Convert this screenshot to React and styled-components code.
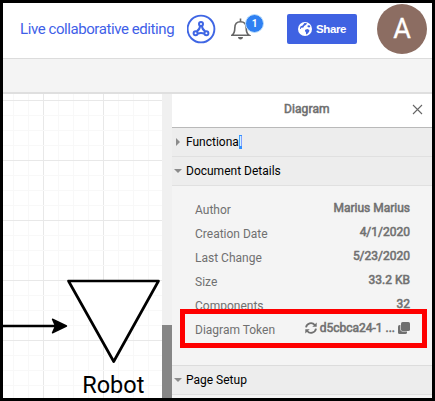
import React from "react";
import styled, { createGlobalStyle } from "styled-components";

const GlobalStyle = createGlobalStyle`
  *, *::before, *::after { box-sizing: border-box; }
  body { margin: 0; background: #000; }
`;

const Frame = styled.div`
  width: 435px;
  height: 401px;
  border: 3px solid #000;
  background: #fff;
  display: flex;
  flex-direction: column;
  overflow: hidden;
  position: relative;
  font-family: Roboto, "Liberation Sans", sans-serif;
`;

const Header = styled.header`
  height: 56px;
  flex: none;
  display: flex;
  align-items: flex-start;
  border-bottom: 1px solid #dcdcdc;
  padding-left: 17px;
`;

const LiveLink = styled.span`
  width: 167px;
  padding-top: 16px;
  font-size: 15px;
  letter-spacing: -0.42px;
  line-height: 20px;
  color: #3f5fe8;
  white-space: nowrap;
`;

const CollabIcon = styled.svg`
  width: 30px;
  height: 30px;
  margin-top: 11px;
  flex: none;
`;

const Notifications = styled.div`
  position: relative;
  width: 34px;
  height: 30px;
  margin: 11px 0 0 14px;
  flex: none;
`;

const BellIcon = styled.svg`
  display: block;
  width: 20px;
  height: 24px;
  margin-top: 3px;
`;

const Badge = styled.span`
  position: absolute;
  left: 14px;
  top: 0;
  width: 19px;
  height: 19px;
  border-radius: 50%;
  border: 1px solid #bfe0fb;
  background: #2f80f2;
  color: #fff;
  font-size: 10px;
  font-weight: 700;
  line-height: 17px;
  text-align: center;
`;

const ShareButton = styled.button`
  width: 70px;
  height: 30px;
  margin: 11px 0 0 22px;
  padding: 0 0 0 11px;
  border: 0;
  border-radius: 2px;
  background: #3f62e2;
  color: #fff;
  display: flex;
  align-items: center;
  gap: 4px;
  font: bold 11.5px/30px "Liberation Sans", Arial, sans-serif;
  letter-spacing: -0.4px;
  flex: none;
`;

const Avatar = styled.div`
  width: 50px;
  height: 50px;
  margin: 1px 0 0 20px;
  border-radius: 50%;
  background: #8c6d62;
  color: #fff;
  font-size: 27px;
  line-height: 51px;
  text-align: center;
  -webkit-text-stroke: 0.3px #fff;
  flex: none;
`;

const Toolbar = styled.div`
  height: 35px;
  flex: none;
  background: #f4f4f4;
  border-bottom: 2px solid #dfdfdf;
`;

const Workspace = styled.main`
  flex: 1;
  min-height: 0;
  display: flex;
`;

const Canvas = styled.svg`
  display: block;
  width: 159px;
  height: 304px;
  flex: none;
`;

const ScrollTrack = styled.div`
  width: 10px;
  padding-top: 231px;
  background: #f0f0f0;
  flex: none;
`;

const ScrollThumb = styled.div`
  height: 100%;
  background: #868686;
`;

const Panel = styled.aside`
  width: 260px;
  background: #f4f4f4;
  flex: none;
`;

const PanelHeader = styled.div`
  height: 34px;
  background: #fff;
  border-bottom: 1px solid #b9b9b9;
  display: flex;
  align-items: center;
  justify-content: flex-end;
  padding: 0 9px 3px 0;
`;

const PanelTitle = styled.span`
  width: 46px;
  margin-right: 82px;
  font-size: 12px;
  line-height: 14px;
  letter-spacing: 0.1px;
  color: #6f6f6f;
  -webkit-text-stroke: 0.55px #6f6f6f;
  white-space: nowrap;
`;

const SectionHeader = styled.div`
  height: ${(p) => (p.$ruled ? 30 : 29)}px;
  background: #ededed;
  border-top: ${(p) => (p.$ruled ? "1px solid #dcdcdc" : "0")};
  border-bottom: 1px solid #e0e0e0;
  display: flex;
  align-items: center;
  padding-left: 2px;
  font-size: 12px;
  color: #000;
`;

const Caret = styled.svg`
  width: 8px;
  height: 8px;
  margin-right: 4px;
  flex: none;
`;

const Selected = styled.mark`
  background: #3390ff;
  color: #fff;
`;

const Details = styled.dl`
  height: 179px;
  margin: 0;
  padding: 12px 22px 0 23px;
`;

const DetailRow = styled.div`
  height: 24px;
  display: flex;
  justify-content: space-between;
  font-size: 12px;
  line-height: 24px;
  color: #707070;
`;

const Label = styled.dt`
  white-space: nowrap;
`;

const Value = styled.dd`
  margin: -2px 0 0;
  height: 24px;
  -webkit-text-stroke: 0.55px #707070;
  display: flex;
  align-items: center;
  gap: 3px;
  white-space: nowrap;
`;

const Highlight = styled.div`
  position: absolute;
  left: 177px;
  top: 306px;
  width: 247px;
  height: 39px;
  border: 5px solid #fe0000;
`;

const MINOR = 15;
const xs = Array.from({ length: 10 }, (_, i) => 10 + i * MINOR);
const ys = Array.from({ length: 20 }, (_, i) => 6 + i * MINOR);
const minorColor = "#f8f8f8";
const majorColor = "#e8e8e8";

const GlobeIcon = () => (
  <svg width="14" height="14" viewBox="0 0 14 14">
    <circle cx="7" cy="7" r="7" fill="#fff" />
    <path
      d="M6.500 1l2.600.3-1 1.500-2 1.100-.7 1.500-2.300.4-.2 1.200-1-.3.500-2.100 2.200-1.200zM9.400 3.700l1.800-.7 1.200 1.700-1.300.8-1.500-.4zM7.200 7.700l2.200-.8 2 1-.3 1.900-1.600 1.900-1.400.7-.2-2.100-1-1.300z"
      fill="#3f62e2"
    />
  </svg>
);

const RefreshIcon = () => (
  <svg width="12" height="12" viewBox="0 0 12 12" fill="none" stroke="#707070" strokeWidth="1.800">
    <path d="M1 5.300A5 5 0 0 1 9.800 3M11 6.700A5 5 0 0 1 2.200 9" />
    <path d="M11.700.4v4.400H7.300zM.3 11.600V7.200h4.400z" fill="#707070" stroke="none" />
  </svg>
);

const CopyIcon = () => (
  <svg width="12" height="12" viewBox="0 0 12 12">
    <rect x="0" y="3" width="9" height="9" rx="1.600" fill="#707070" />
    <rect x="2.400" y="-.6" width="10.200" height="10.200" rx="2" fill="#f4f4f4" />
    <rect x="3" y="0" width="9" height="9" rx="1.600" fill="#707070" />
  </svg>
);

const SectionTitle = ({ open, ruled, children }) => (
  <SectionHeader $ruled={ruled}>
    <Caret viewBox="0 0 8 8">
      <path d={open ? "M0 2h8L4 6z" : "M2 0v8l4-4z"} fill="#8b8b8b" />
    </Caret>
    <span>{children}</span>
  </SectionHeader>
);

const Row = ({ label, children }) => (
  <DetailRow>
    <Label>{label}</Label>
    <Value>{children}</Value>
  </DetailRow>
);

export default function App() {
  return (
    <>
      <GlobalStyle />
      <Frame>
        <Header>
          <LiveLink>Live collaborative editing</LiveLink>
          <CollabIcon viewBox="0 0 30 30" fill="none" stroke="#3f66e4">
            <circle cx="14" cy="15" r="13.4" strokeWidth="1.900" />
            <g strokeWidth="2">
              <circle cx="14" cy="10" r="2" />
              <circle cx="8.600" cy="19.300" r="2" />
              <circle cx="19.400" cy="19.300" r="2" />
              <path d="M13 12c0 2-1.200 4-3.200 5.400M15 12c0 2 1.200 4 3.200 5.400M10.800 19.600q3.200-1 6.400 0" />
            </g>
          </CollabIcon>
          <Notifications>
            <BellIcon viewBox="0 0 20 24" fill="none" stroke="#666" strokeWidth="1.600">
              <path d="M1 18.200c2.600-1.800 2.800-3.500 2.800-7.200 0-3.800 2-6.200 5.700-6.200s5.700 2.400 5.700 6.200c0 3.700.2 5.400 2.800 7.200z" />
              <path d="M9.500 1.500v3" />
              <path d="M7 20h5c0 1.500-1 2.500-2.500 2.500S7 21.500 7 20z" fill="#666" stroke="none" />
            </BellIcon>
            <Badge>1</Badge>
          </Notifications>
          <ShareButton>
            <GlobeIcon />
            Share
          </ShareButton>
          <Avatar>A</Avatar>
        </Header>
        <Toolbar />
        <Workspace>
          <Canvas viewBox="0 0 159 304">
            {xs.map((x, i) => (
              <rect key={x} x={x} y="0" width="1" height="304" fill={i % 4 === 2 ? majorColor : minorColor} />
            ))}
            {ys.map((y, i) => (
              <rect key={y} x="0" y={y} width="159" height="1" fill={i % 4 === 0 ? majorColor : minorColor} />
            ))}
            <path d="M65.500 187h90L110.700 267.500z" fill="#fff" stroke="#000" strokeWidth="2.700" strokeLinejoin="round" />
            <path d="M0 232h54" stroke="#000" strokeWidth="2.700" />
            <path d="M63.500 232L49.500 225.200L52.500 232L49.500 238.800z" stroke="#000" strokeWidth="1.400" strokeLinejoin="round" />
            <text x="110.300" y="299.300" textAnchor="middle" fontSize="23.500">Robot</text>
          </Canvas>
          <ScrollTrack>
            <ScrollThumb />
          </ScrollTrack>
          <Panel>
            <PanelHeader>
              <PanelTitle>Diagram</PanelTitle>
              <svg width="11" height="11" viewBox="0 0 11 11" stroke="#666" strokeWidth="1.100">
                <path d="M1 1l9 9M10 1l-9 9" />
              </svg>
            </PanelHeader>
            <SectionTitle>
              Functiona<Selected>l</Selected>
            </SectionTitle>
            <SectionTitle open>Document Details</SectionTitle>
            <Details>
              <Row label="Author">Marius Marius</Row>
              <Row label="Creation Date">4/1/2020</Row>
              <Row label="Last Change">5/23/2020</Row>
              <Row label="Size">33.2 KB</Row>
              <Row label="Components">32</Row>
              <Row label="Diagram Token">
                <RefreshIcon />
                <span>d5cbca24-1 ...</span>
                <CopyIcon />
              </Row>
            </Details>
            <SectionTitle open ruled>Page Setup</SectionTitle>
          </Panel>
        </Workspace>
        <Highlight />
      </Frame>
    </>
  );
}
